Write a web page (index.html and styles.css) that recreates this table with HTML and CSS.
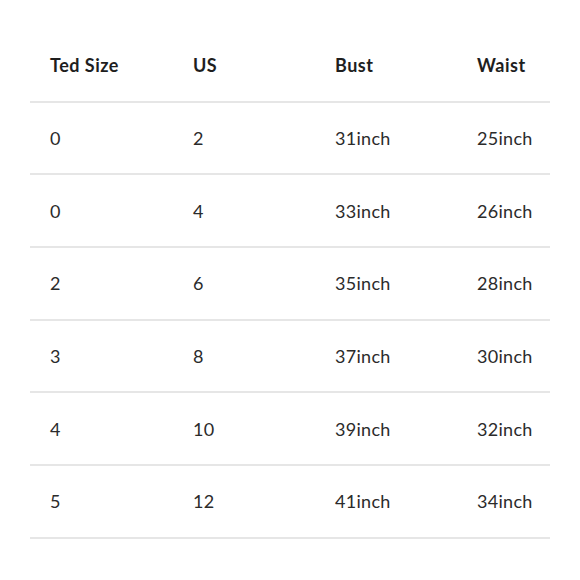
FILE: index.html
```html
<!DOCTYPE html>
<html>
<head>
<meta charset="utf-8">
<link rel="stylesheet" href="styles.css">
</head>
<body>
<div class="page">
  <div class="table">
    <div class="row head">
      <div class="cell">Ted Size</div>
      <div class="cell">US</div>
      <div class="cell">Bust</div>
      <div class="cell">Waist</div>
    </div>
    <div class="row">
      <div class="cell">0</div><div class="cell">2</div><div class="cell">31inch</div><div class="cell">25inch</div>
    </div>
    <div class="row">
      <div class="cell">0</div><div class="cell">4</div><div class="cell">33inch</div><div class="cell">26inch</div>
    </div>
    <div class="row">
      <div class="cell">2</div><div class="cell">6</div><div class="cell">35inch</div><div class="cell">28inch</div>
    </div>
    <div class="row">
      <div class="cell">3</div><div class="cell">8</div><div class="cell">37inch</div><div class="cell">30inch</div>
    </div>
    <div class="row">
      <div class="cell">4</div><div class="cell">10</div><div class="cell">39inch</div><div class="cell">32inch</div>
    </div>
    <div class="row">
      <div class="cell">5</div><div class="cell">12</div><div class="cell">41inch</div><div class="cell">34inch</div>
    </div>
  </div>
</div>
</body>
</html>
```

FILE: styles.css
```css
html, body {
  margin: 0;
  padding: 0;
  background: #ffffff;
}
.page {
  padding: 30px 30px 0 30px;
  font-family: "Lato", "Open Sans", sans-serif;
  color: #2b2b2b;
}
.table {
  display: flex;
  flex-direction: column;
}
.row {
  display: grid;
  grid-template-columns: 143px 142px 142px 1fr;
  padding-left: 20px;
  height: 70.7px;
  align-items: center;
  border-bottom: 2px solid #e6e6e6;
  font-size: 18px;
  letter-spacing: 0.3px;
}
.row.head {
  font-weight: 700;
  font-size: 18px;
  color: #1e1e1e;
  letter-spacing: 0.5px;
}
```
